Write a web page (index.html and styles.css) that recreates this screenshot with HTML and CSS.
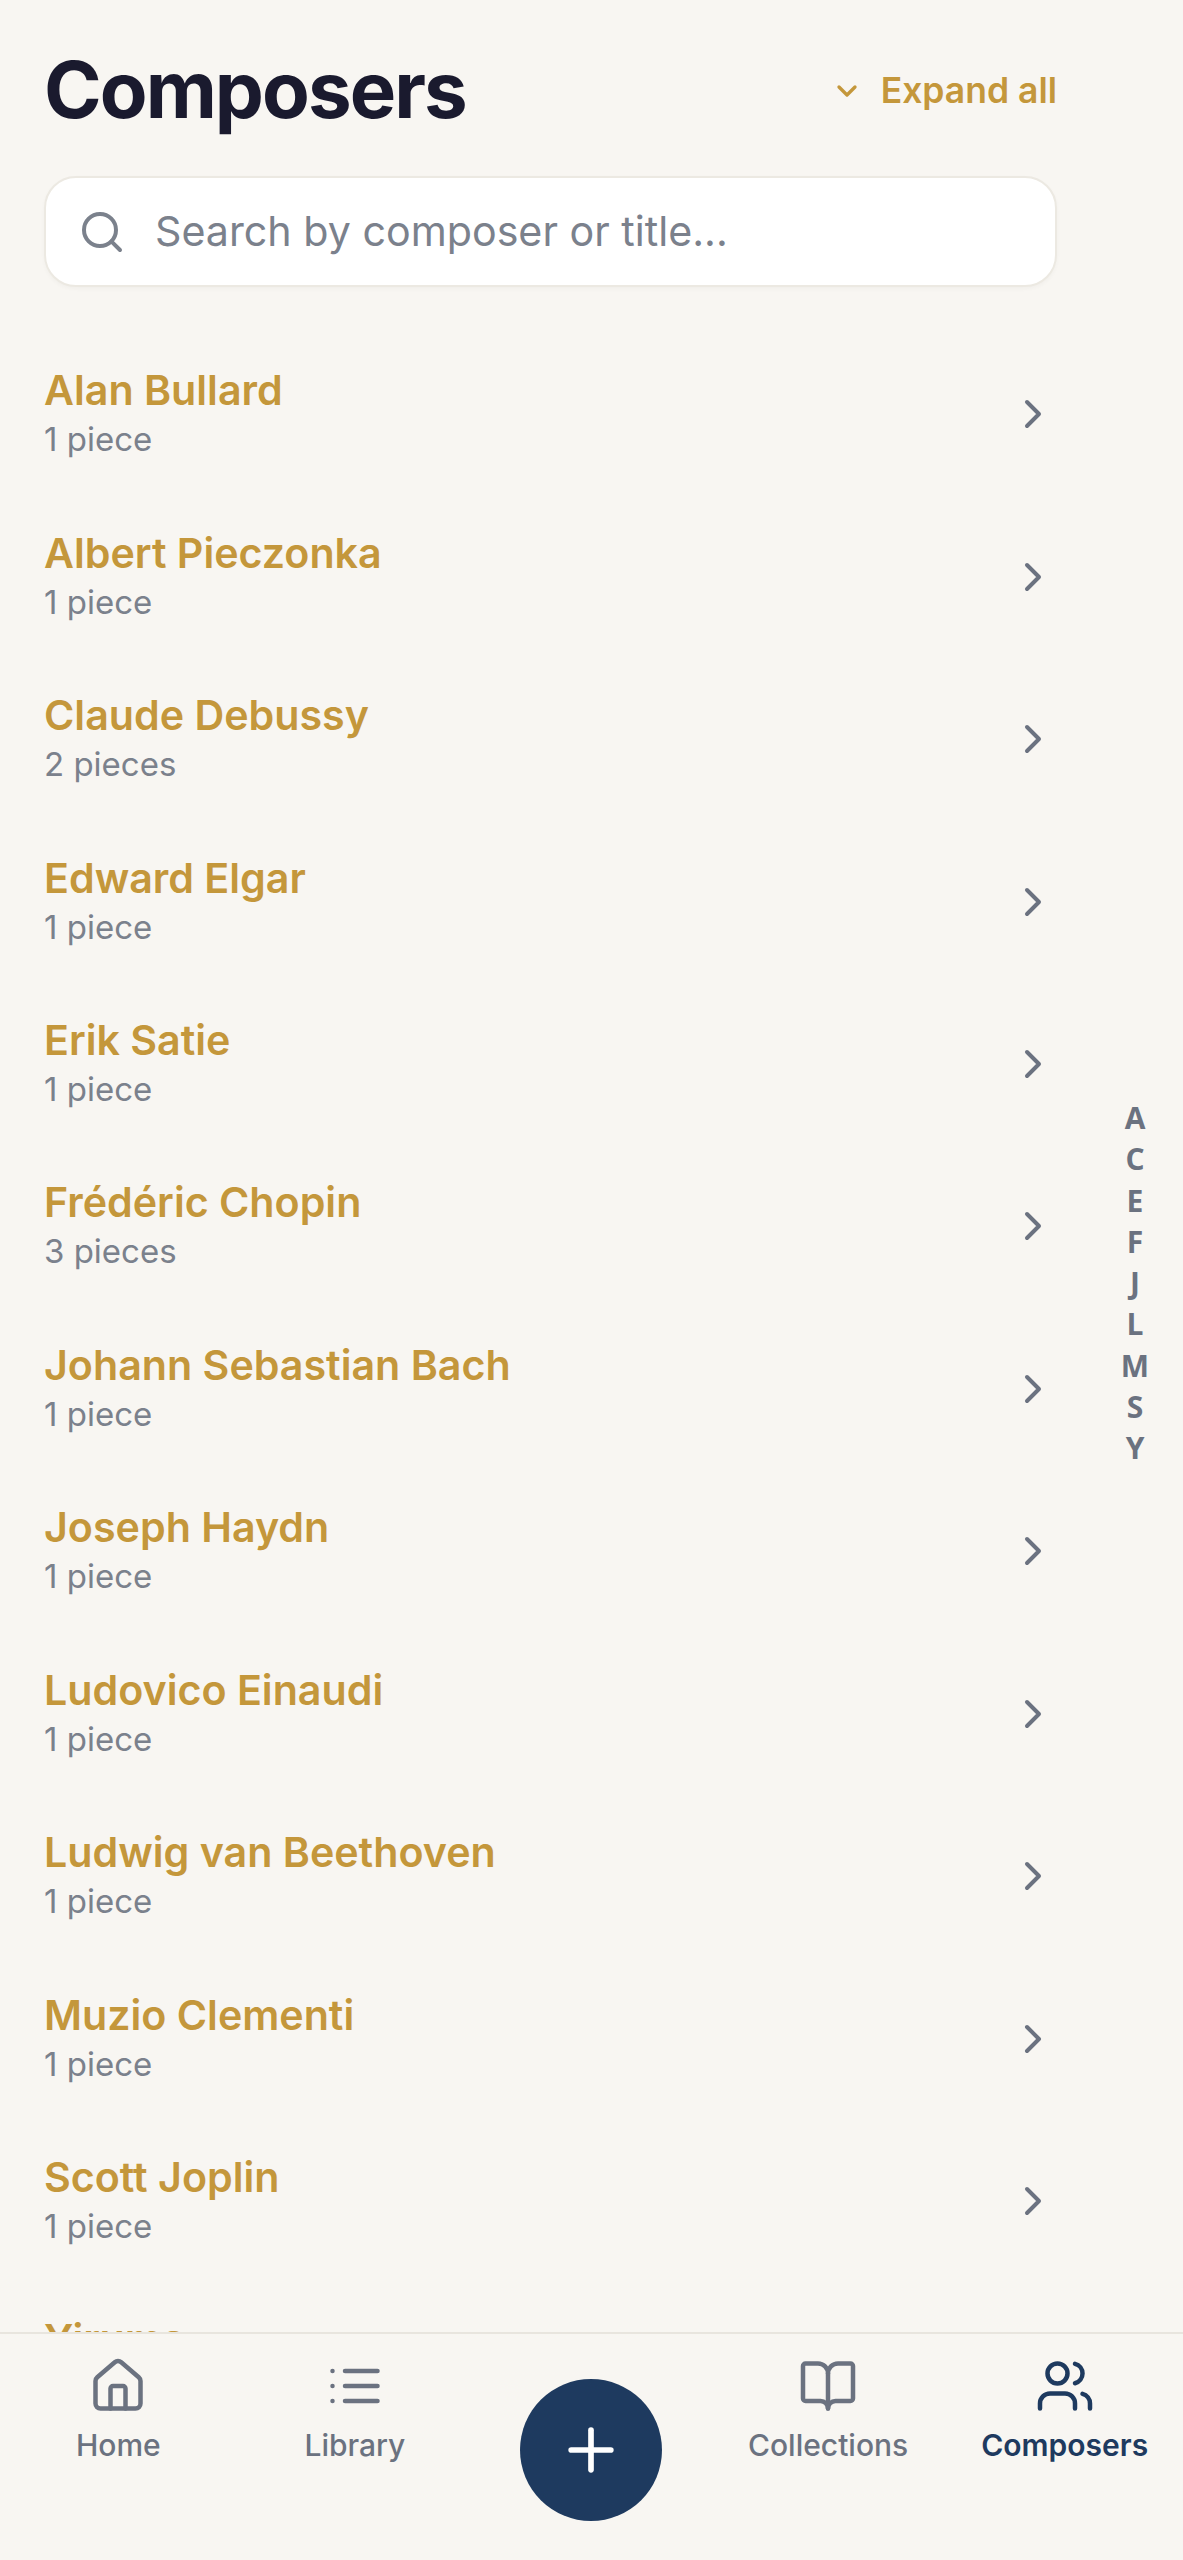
FILE: index.html
```html
<!DOCTYPE html>
<html lang="en">
<head>
<meta charset="utf-8">
<title>Composers</title>
<link rel="stylesheet" href="styles.css">
</head>
<body>
<main class="page">
  <header class="head">
    <h1 class="title">Composers</h1>
    <button class="expand"><svg class="expand-icon" viewBox="0 0 24 24"><path d="m6 9 6 6 6-6"/></svg>Expand all</button>
  </header>
  <div class="search">
    <svg class="search-icon" viewBox="0 0 24 24"><path d="m21 21-4.34-4.34"/><circle cx="11" cy="11" r="8"/></svg>
    <span class="search-text">Search by composer or title...</span>
  </div>
  <ul class="list">
    <li class="row"><div class="info"><div class="name">Alan Bullard</div><div class="count">1 piece</div></div><svg class="chev" viewBox="0 0 24 24"><path d="m9 18 6-6-6-6"/></svg></li>
    <li class="row"><div class="info"><div class="name">Albert Pieczonka</div><div class="count">1 piece</div></div><svg class="chev" viewBox="0 0 24 24"><path d="m9 18 6-6-6-6"/></svg></li>
    <li class="row"><div class="info"><div class="name">Claude Debussy</div><div class="count">2 pieces</div></div><svg class="chev" viewBox="0 0 24 24"><path d="m9 18 6-6-6-6"/></svg></li>
    <li class="row"><div class="info"><div class="name">Edward Elgar</div><div class="count">1 piece</div></div><svg class="chev" viewBox="0 0 24 24"><path d="m9 18 6-6-6-6"/></svg></li>
    <li class="row"><div class="info"><div class="name">Erik Satie</div><div class="count">1 piece</div></div><svg class="chev" viewBox="0 0 24 24"><path d="m9 18 6-6-6-6"/></svg></li>
    <li class="row"><div class="info"><div class="name">Frédéric Chopin</div><div class="count">3 pieces</div></div><svg class="chev" viewBox="0 0 24 24"><path d="m9 18 6-6-6-6"/></svg></li>
    <li class="row"><div class="info"><div class="name">Johann Sebastian Bach</div><div class="count">1 piece</div></div><svg class="chev" viewBox="0 0 24 24"><path d="m9 18 6-6-6-6"/></svg></li>
    <li class="row"><div class="info"><div class="name">Joseph Haydn</div><div class="count">1 piece</div></div><svg class="chev" viewBox="0 0 24 24"><path d="m9 18 6-6-6-6"/></svg></li>
    <li class="row"><div class="info"><div class="name">Ludovico Einaudi</div><div class="count">1 piece</div></div><svg class="chev" viewBox="0 0 24 24"><path d="m9 18 6-6-6-6"/></svg></li>
    <li class="row"><div class="info"><div class="name">Ludwig van Beethoven</div><div class="count">1 piece</div></div><svg class="chev" viewBox="0 0 24 24"><path d="m9 18 6-6-6-6"/></svg></li>
    <li class="row"><div class="info"><div class="name">Muzio Clementi</div><div class="count">1 piece</div></div><svg class="chev" viewBox="0 0 24 24"><path d="m9 18 6-6-6-6"/></svg></li>
    <li class="row"><div class="info"><div class="name">Scott Joplin</div><div class="count">1 piece</div></div><svg class="chev" viewBox="0 0 24 24"><path d="m9 18 6-6-6-6"/></svg></li>
    <li class="row"><div class="info"><div class="name">Yiruma</div><div class="count">1 piece</div></div><svg class="chev" viewBox="0 0 24 24"><path d="m9 18 6-6-6-6"/></svg></li>
  </ul>
</main>
<aside class="alpha">
  <span>A</span><span>C</span><span>E</span><span>F</span><span>J</span><span>L</span><span>M</span><span>S</span><span>Y</span>
</aside>
<nav class="nav">
  <a class="tab"><svg class="tab-icon" viewBox="0 0 24 24"><path d="M15 21v-8a1 1 0 0 0-1-1h-4a1 1 0 0 0-1 1v8"/><path d="M3 10a2 2 0 0 1 .709-1.528l7-5.999a2 2 0 0 1 2.582 0l7 5.999A2 2 0 0 1 21 10v9a2 2 0 0 1-2 2H5a2 2 0 0 1-2-2z"/></svg><span>Home</span></a>
  <a class="tab"><svg class="tab-icon" viewBox="0 0 24 24"><path d="M3 6h.01"/><path d="M3 12h.01"/><path d="M3 18h.01"/><path d="M8 6h13"/><path d="M8 12h13"/><path d="M8 18h13"/></svg><span>Library</span></a>
  <div class="fab-cell"><button class="fab"><svg class="fab-icon" viewBox="0 0 24 24"><path d="M5 12h14"/><path d="M12 5v14"/></svg></button></div>
  <a class="tab"><svg class="tab-icon" viewBox="0 0 24 24"><path d="M12 7v14"/><path d="M3 18a1 1 0 0 1-1-1V4a1 1 0 0 1 1-1h5a4 4 0 0 1 4 4 4 4 0 0 1 4-4h5a1 1 0 0 1 1 1v13a1 1 0 0 1-1 1h-6a3 3 0 0 0-3 3 3 3 0 0 0-3-3z"/></svg><span>Collections</span></a>
  <a class="tab tab-active"><svg class="tab-icon" viewBox="0 0 24 24"><path d="M16 21v-2a4 4 0 0 0-4-4H6a4 4 0 0 0-4 4v2"/><circle cx="9" cy="7" r="4"/><path d="M22 21v-2a4 4 0 0 0-3-3.87"/><path d="M16 3.13a4 4 0 0 1 0 7.75"/></svg><span>Composers</span></a>
</nav>
</body>
</html>
```
FILE: styles.css
```css
* { box-sizing: border-box; }
html, body { margin: 0; height: 100%; }
body {
  background: #f8f6f2;
  font-family: "Inter", "Liberation Sans", sans-serif;
  overflow: hidden;
  height: 2560px;
  position: relative;
}
svg { fill: none; stroke: currentColor; stroke-width: 2; stroke-linecap: round; stroke-linejoin: round; display: block; }
.page { padding: 48px 126px 0 44px; }
.head { display: flex; align-items: center; justify-content: space-between; height: 84px; }
.title { margin: 0; font-size: 78px; font-weight: 700; line-height: 84px; color: #1a1a2e; letter-spacing: -1.95px; }
.expand { display: flex; align-items: center; gap: 18px; padding: 2px 0 0; border: 0; background: none; color: #c4973b; font: 600 35.5px/44px "Inter", sans-serif; }
.expand-icon { width: 32px; height: 32px; stroke-width: 2.5; }
.search {
  display: flex; align-items: center; gap: 29px;
  margin-top: 44px; height: 111px; padding: 0 32px;
  background: #fff; border: 2px solid #ece9e2; border-radius: 32px;
  box-shadow: 0 2px 4px rgba(0,0,0,.03);
  color: #7b818c;
}
.search-icon { width: 48px; height: 48px; flex: none; }
.search-text { padding-bottom: 2px; font-size: 41.2px; line-height: 52px; color: #7b818c; }
.list { list-style: none; margin: 46px 0 0; padding: 0; }
.row { display: flex; align-items: center; justify-content: space-between; height: 162.45px; }
.name { font-size: 41.2px; font-weight: 600; line-height: 48px; color: #c4973b; }
.count { margin-top: 2px; font-size: 33px; line-height: 46px; color: #7b818c; }
.chev { width: 48px; height: 48px; color: #6b7280; flex: none; }
.alpha {
  position: absolute; top: 1097px; right: 24px; width: 48px;
  display: flex; flex-direction: column; align-items: center;
  font-family: "Open Sans", sans-serif; font-size: 30px; font-weight: 700; line-height: 41.25px; color: #6b7280;
}
.nav {
  position: absolute; left: 0; right: 0; bottom: 0; height: 228px;
  display: grid; grid-template-columns: repeat(5, 1fr);
  background: #f8f6f2; border-top: 2px solid #e8e5de;
}
.tab { display: flex; flex-direction: column; align-items: center; padding-top: 22px; color: #6b7280; font-size: 30px; font-weight: 500; line-height: 40px; }
.tab-icon { width: 60px; height: 60px; stroke-width: 1.8; margin-bottom: 9px; }
.tab-active { color: #1e3a5f; font-weight: 600; }
.fab-cell { display: flex; justify-content: center; padding-top: 45px; }
.fab { width: 142px; height: 142px; border: 0; padding: 0; border-radius: 50%; background: #1e3a5f; color: #fff; display: flex; align-items: center; justify-content: center; }
.fab-icon { width: 68px; height: 68px; stroke-width: 2; }
```
